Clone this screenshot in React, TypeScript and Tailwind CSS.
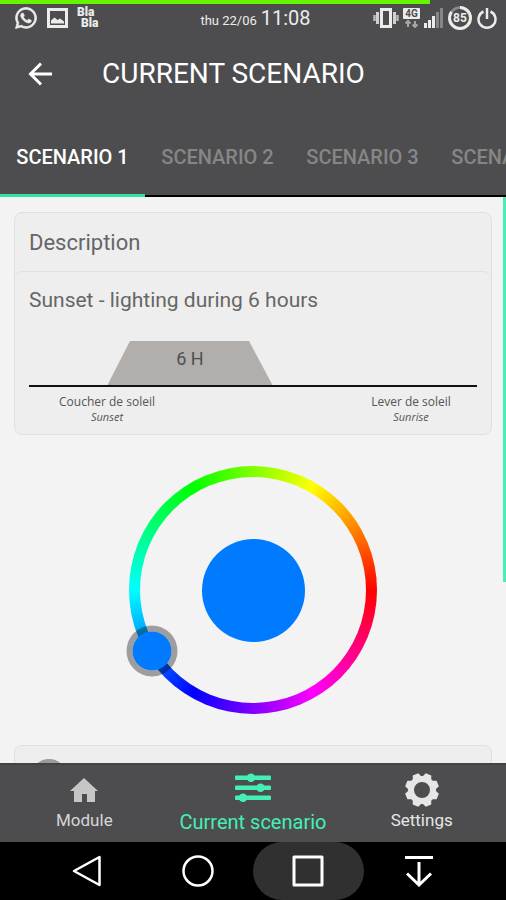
import { useState } from 'react';
import type { ReactNode } from 'react';
import { FaWhatsapp } from 'react-icons/fa';

const tabs = ['SCENARIO 1', 'SCENARIO 2', 'SCENARIO 3', 'SCENARIO 4'];

const RING_RADIUS = 118;

function StatusBar() {
  return (
    <div>
      <div className="h-1 w-[85%] bg-[#66f500]" />
      <div className="grid h-7 grid-cols-[1fr_auto_1fr] items-center pl-[14px] pr-[9px] text-[#ececec]">
        <div className="flex items-center gap-[9px]">
          <FaWhatsapp className="size-6 stroke-current stroke-[16]" />
          <svg viewBox="0 0 21 20" className="h-5 w-[21px]" fill="none">
            <path d="M1.5 1.5h18v17h-18z" stroke="currentColor" strokeWidth="3" />
            <path d="M4 15.500v-3l3.500-3 3 2.500 2.500-1.500 4 3v2z" fill="currentColor" />
          </svg>
          <div className="text-xs font-black leading-[11px]">
            <div>Bla</div>
            <div className="pl-1">Bla</div>
          </div>
        </div>
        <div className="flex items-baseline gap-1">
          <span className="text-[13px]">thu 22/06</span>
          <span className="text-xl">11:08</span>
        </div>
        <div className="flex items-center justify-end gap-1">
          <svg viewBox="0 0 26 20" className="h-5 w-[26px]" fill="none" stroke="currentColor">
            <path d="M8.500 1.500h9v17h-9z" strokeWidth="3" />
            <path d="M4.500 4v12M21.500 4v12" strokeWidth="3" stroke="#d0d0d0" />
            <path d="M1.500 7v6M24.500 7v6" strokeWidth="2.500" stroke="#b8b8b8" />
          </svg>
          <svg viewBox="0 0 17 20" className="h-5 w-[17px]">
            <rect width="17" height="11" rx="1" fill="currentColor" />
            <text x="8.500" y="9" textAnchor="middle" fontSize="10" fontWeight="700" fill="#4d4d4f">4G</text>
            <path d="M5 19v-6M2.500 15.500 5 13l2.500 2.500M12 13v6M9.500 16.500 12 19l2.500-2.500" fill="none" stroke="#a5a5a6" strokeWidth="2" />
          </svg>
          <svg viewBox="0 0 20 20" className="size-5">
            <path d="M0 15h3v5H0zM4 12h3v8H4zM8 8h3v12H8z" fill="currentColor" />
            <path d="M12 4h3v16h-3zM16 0h3v20h-3z" fill="#858586" />
          </svg>
          <svg viewBox="0 0 24 24" className="size-6">
            <circle cx="12" cy="12" r="10.500" fill="none" stroke="#8a8a8b" strokeWidth="2.500" />
            <circle cx="12" cy="12" r="10.500" fill="none" stroke="currentColor" strokeWidth="3" pathLength="100" strokeDasharray="85 15" transform="rotate(-90 12 12)" />
            <text x="12" y="16" textAnchor="middle" fontSize="12" fontWeight="700" fill="currentColor">85</text>
          </svg>
          <svg viewBox="0 0 21 24" className="h-6 w-[21px]" fill="none" stroke="currentColor" strokeWidth="2.500">
            <path d="M7.500 5.500a8.500 8.500 0 1 0 7 0M11 2v11" />
          </svg>
        </div>
      </div>
    </div>
  );
}

function SunsetChart() {
  return (
    <div>
      <svg viewBox="0 0 448 46" className="w-full">
        <path d="M78 45 101 0h119l24 45z" fill="#b1aeab" />
        <path d="M0 45h448" stroke="#111" strokeWidth="2" />
        <text x="161" y="24" textAnchor="middle" fontSize="18" fill="#505050">6 H</text>
      </svg>
      <div className="mt-[7px] flex justify-between text-center font-['Open_Sans','Noto_Sans',sans-serif] text-xs leading-[15px] text-[#555]">
        <div className="w-[156px]">
          <p>Coucher de soleil</p>
          <p className="text-[11px] italic">Sunset</p>
        </div>
        <div className="w-[132px]">
          <p>Lever de soleil</p>
          <p className="text-[11px] italic">Sunrise</p>
        </div>
      </div>
    </div>
  );
}

function ColorWheel() {
  const [hue, setHue] = useState(211);
  const angle = (hue * Math.PI) / 180;
  const color = `hsl(${hue} 100% 50%)`;

  return (
    <div className="relative mx-auto grid size-[248px] place-items-center rounded-full bg-[conic-gradient(from_90deg,#f00,#f0f,#00f,#0ff,#0f0,#ff0,#f00)]">
      <div className="grid size-[226px] place-items-center rounded-full bg-[#f3f3f3]">
        <div className="size-[103px] rounded-full" style={{ backgroundColor: color }} />
      </div>
      {/* Handle */}
      <div
        className="absolute size-[51px] -translate-x-1/2 -translate-y-1/2 rounded-full border-[6px] border-black/35 bg-clip-padding"
        style={{
          backgroundColor: color,
          left: 124 + RING_RADIUS * Math.cos(angle),
          top: 124 - RING_RADIUS * Math.sin(angle),
        }}
      />
      <input
        type="range"
        aria-label="Color"
        min={0}
        max={360}
        value={hue}
        onChange={(e) => setHue(Number(e.target.value))}
        className="absolute inset-0 size-full cursor-pointer opacity-0"
      />
    </div>
  );
}

function NavItem({ label, className, children }: { label: string; className: string; children: ReactNode }) {
  return (
    <button className={`flex flex-col items-center ${className}`}>
      <span className="flex h-9 items-center">{children}</span>
      {label}
    </button>
  );
}

export default function App() {
  const [activeTab, setActiveTab] = useState(tabs[0]);

  return (
    <div className="flex h-screen flex-col overflow-hidden bg-[#f3f3f3] font-['Roboto',sans-serif]">
      {/* Header */}
      <header className="bg-[#4d4d4f] text-white">
        <StatusBar />
        <div className="flex h-[84px] items-center gap-[50px] pl-7">
          <button aria-label="Back">
            <svg viewBox="0 0 24 24" className="size-6" fill="none" stroke="currentColor" strokeWidth="3">
              <path d="M24 12H2.500M13 1.500 2.500 12 13 22.500" />
            </svg>
          </button>
          <h1 className="whitespace-nowrap text-[28px]">CURRENT SCENARIO</h1>
        </div>
        <nav className="flex h-[81px] overflow-hidden shadow-[inset_0_-2px_0_#000]">
          {tabs.map((tab) => (
            <button
              key={tab}
              onClick={() => setActiveTab(tab)}
              className={`w-[145px] shrink-0 whitespace-nowrap border-b-3 pt-[3px] text-xl font-medium ${
                tab === activeTab ? 'border-[#35dfaa] text-white' : 'border-transparent text-[#868686]'
              }`}
            >
              {tab}
            </button>
          ))}
        </nav>
      </header>

      {/* Content */}
      <main className="relative min-h-0 flex-1 overflow-hidden px-[14px] pt-[15px]">
        <section className="rounded-lg border border-[#e0e0e0] bg-[#eee] text-[#666]">
          <h2 className="px-[14px] pb-3 pt-[14px] text-[22px] leading-8">Description</h2>
          <div className="rounded-t-lg border-t border-[#e0e0e0] px-[14px] pb-[10px] pt-3">
            <p className="mb-[25px] text-[21px] leading-8">Sunset - lighting during 6 hours</p>
            <SunsetChart />
          </div>
        </section>

        <div className="py-[31px]">
          <ColorWheel />
        </div>

        <section className="h-40 rounded-lg border border-[#e0e0e0] bg-[#eee] px-4 py-[13px]">
          <div className="size-9 rounded-full bg-[#9b9b9b]" />
        </section>

        {/* Scroll indicator */}
        <div className="absolute right-0 top-0 h-[68%] w-[3px] bg-[#45efb5]" />
      </main>

      {/* Bottom navigation */}
      <nav className="grid h-[79px] shrink-0 grid-cols-3 border-t-2 border-[#434345] bg-[#4d4d4f] pt-[7px] leading-6">
        <NavItem label="Module" className="text-[17px] text-[#d6d6d6]">
          <svg viewBox="0 0 28 24" className="h-6 w-7" fill="#c6c6c6">
            <path d="M14 0 28 13h-3v11h-8v-8h-5v8H4V13H0z" />
          </svg>
        </NavItem>
        <NavItem label="Current scenario" className="text-xl text-[#45efb5]">
          <svg viewBox="0 0 36 34" className="h-[34px] w-9 fill-current">
            <rect y="2.500" width="36" height="4.500" rx="1" />
            <rect y="12.500" width="36" height="4.500" rx="1" />
            <rect y="22.500" width="36" height="4.500" rx="1" />
            <circle cx="16" cy="4.750" r="4.250" />
            <circle cx="25.500" cy="14.750" r="4.250" />
            <circle cx="8" cy="24.750" r="4.250" />
          </svg>
        </NavItem>
        <NavItem label="Settings" className="text-[17px] text-[#e6e6e6]">
          <svg viewBox="-17 -17 34 34" className="size-[34px]">
            <circle r="11" fill="none" stroke="#e6e6e6" strokeWidth="6" />
            {[22.5, 67.5, 112.5, 157.5, 202.5, 247.5, 292.5, 337.5].map((deg) => (
              <path key={deg} d="M-5-12-3-17H3L5-12z" fill="#e6e6e6" transform={`rotate(${deg})`} />
            ))}
          </svg>
        </NavItem>
      </nav>

      {/* System buttons */}
      <div className="grid h-[58px] shrink-0 grid-cols-4 bg-black px-8 text-white">
        <button aria-label="Back" className="grid place-items-center">
          <svg viewBox="0 0 32 32" className="size-8" fill="none" stroke="currentColor" strokeWidth="2.500" strokeLinejoin="round">
            <path d="M28.500 2v28L3 16z" />
          </svg>
        </button>
        <button aria-label="Home" className="grid place-items-center">
          <svg viewBox="0 0 32 32" className="size-8" fill="none" stroke="currentColor" strokeWidth="2.500">
            <circle cx="16" cy="16" r="14.500" />
          </svg>
        </button>
        <button aria-label="Recent apps" className="grid place-items-center rounded-full bg-[#303030]">
          <svg viewBox="0 0 32 32" className="size-8" fill="none" stroke="currentColor" strokeWidth="3" strokeLinejoin="round">
            <path d="M2 2h28v28H2z" />
          </svg>
        </button>
        <button aria-label="Hide bar" className="grid place-items-center">
          <svg viewBox="0 0 32 32" className="size-8" fill="none" stroke="currentColor" strokeWidth="3">
            <path d="M2 2.500h28M16 7v22M4 18.500 16 30l12-11.500" />
          </svg>
        </button>
      </div>
    </div>
  );
}
